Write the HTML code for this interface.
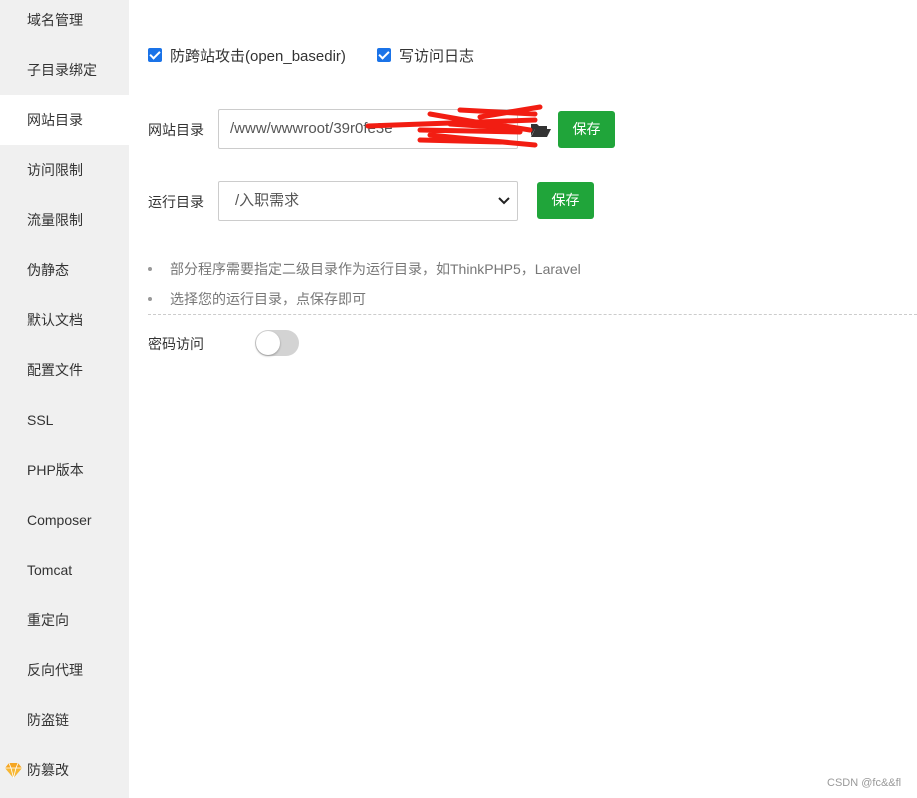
<!DOCTYPE html>
<html><head><meta charset="utf-8"><style>
*{margin:0;padding:0;box-sizing:border-box}
body{width:917px;height:798px;background:#fff;font-family:"Liberation Sans","Noto Sans CJK SC",sans-serif;font-size:14px;color:#333;position:relative;overflow:hidden}
.side{position:absolute;left:0;top:0;width:129px;height:798px;background:#f0f0f0}
.side div{position:absolute;left:0;width:129px;height:50px;line-height:50px;padding-left:27px;font-size:14px;color:#333}
.side .act{background:#fff}
.abs{position:absolute}
.cb{position:absolute;width:14px;height:14px;background:#1a73e8;border-radius:2px}
.cb:after{content:"";position:absolute;left:4px;top:1px;width:4px;height:8px;border:solid #fff;border-width:0 2px 2px 0;transform:rotate(45deg)}
.inp{position:absolute;border:1px solid #ccc;border-radius:2px;height:40px;line-height:38px;padding-left:11px;font-size:15px;color:#555}
.btn{position:absolute;background:#20a53a;color:#fff;border-radius:3px;height:37px;line-height:37px;text-align:center;width:57px;font-size:14px}
.note{position:absolute;left:148px;color:#777;font-size:14px}
.note:before{content:"";position:absolute;left:0;top:8px;width:4px;height:4px;border-radius:50%;background:#999}
.note span{margin-left:22px}
</style></head><body>
<div class="side">
<div style="top:-5px">域名管理</div>
<div style="top:45px">子目录绑定</div>
<div class="act" style="top:95px">网站目录</div>
<div style="top:145px">访问限制</div>
<div style="top:195px">流量限制</div>
<div style="top:245px">伪静态</div>
<div style="top:295px">默认文档</div>
<div style="top:345px">配置文件</div>
<div style="top:395px">SSL</div>
<div style="top:445px">PHP版本</div>
<div style="top:495px">Composer</div>
<div style="top:545px">Tomcat</div>
<div style="top:595px">重定向</div>
<div style="top:645px">反向代理</div>
<div style="top:695px">防盗链</div>
<div style="top:745px">防篡改</div>
</div>
<svg class="abs" style="left:5px;top:763px" width="17" height="15" viewBox="0 0 17 15"><polygon points="4,0 13,0 17,5 8.5,15 0,5" fill="#f5a623"/><polygon points="0,5 17,5 8.5,15" fill="#f7b733"/><path d="M4 0L6 5L8.5 15L11 5L13 0M0 5H17" stroke="#fff" stroke-width="0.8" fill="none"/></svg>

<div class="cb" style="left:148px;top:48px"></div>
<div class="abs" style="left:170px;top:45px;font-size:15px">防跨站攻击(open_basedir)</div>
<div class="cb" style="left:377px;top:48px"></div>
<div class="abs" style="left:399px;top:45px;font-size:15px">写访问日志</div>

<div class="abs" style="left:148px;top:120px">网站目录</div>
<div class="inp" style="left:218px;top:109px;width:300px">/www/wwwroot/39r0fe3e</div>
<svg class="abs" style="left:531px;top:123px" width="20" height="14" viewBox="0 0 20 14"><path d="M0 1h6l2 2h8v3H4L0 13z" fill="#333"/><path d="M4 6h16l-4 8H0z" fill="#333"/></svg>
<div class="btn" style="left:558px;top:111px">保存</div>
<svg class="abs" style="left:360px;top:102px" width="185" height="48" viewBox="0 0 185 48"><g stroke="#f21d12" stroke-width="5" fill="none" stroke-linecap="round"><path d="M8 24L175 18M70 12L150 26M120 15L180 5M100 8L175 12M60 28L160 30M150 26L90 22M60 38L140 40M140 40L70 33M100 36L175 43M120 20L170 28"/></g></svg>

<div class="abs" style="left:148px;top:192px">运行目录</div>
<div class="inp" style="left:218px;top:181px;width:300px;padding-left:16px">/入职需求</div>
<svg class="abs" style="left:498px;top:196px" width="12" height="10" viewBox="0 0 12 10"><path d="M1 2l5 5 5-5" stroke="#222" stroke-width="2" fill="none"/></svg>
<div class="btn" style="left:537px;top:182px">保存</div>

<div class="note" style="top:259px"><span>部分程序需要指定二级目录作为运行目录，如ThinkPHP5，Laravel</span></div>
<div class="note" style="top:289px"><span>选择您的运行目录，点保存即可</span></div>
<div class="abs" style="left:148px;top:314px;width:769px;border-top:1px dashed #ccc"></div>

<div class="abs" style="left:148px;top:334px">密码访问</div>
<div class="abs" style="left:255px;top:330px;width:44px;height:26px;border-radius:13px;background:#d3d3d3"></div>
<div class="abs" style="left:256px;top:331px;width:24px;height:24px;border-radius:50%;background:#fff;box-shadow:0 1px 2px rgba(0,0,0,.3)"></div>

<div class="abs" style="left:827px;top:777px;font-size:11px;color:#999">CSDN @fc&amp;&amp;fl</div>
</body></html>
